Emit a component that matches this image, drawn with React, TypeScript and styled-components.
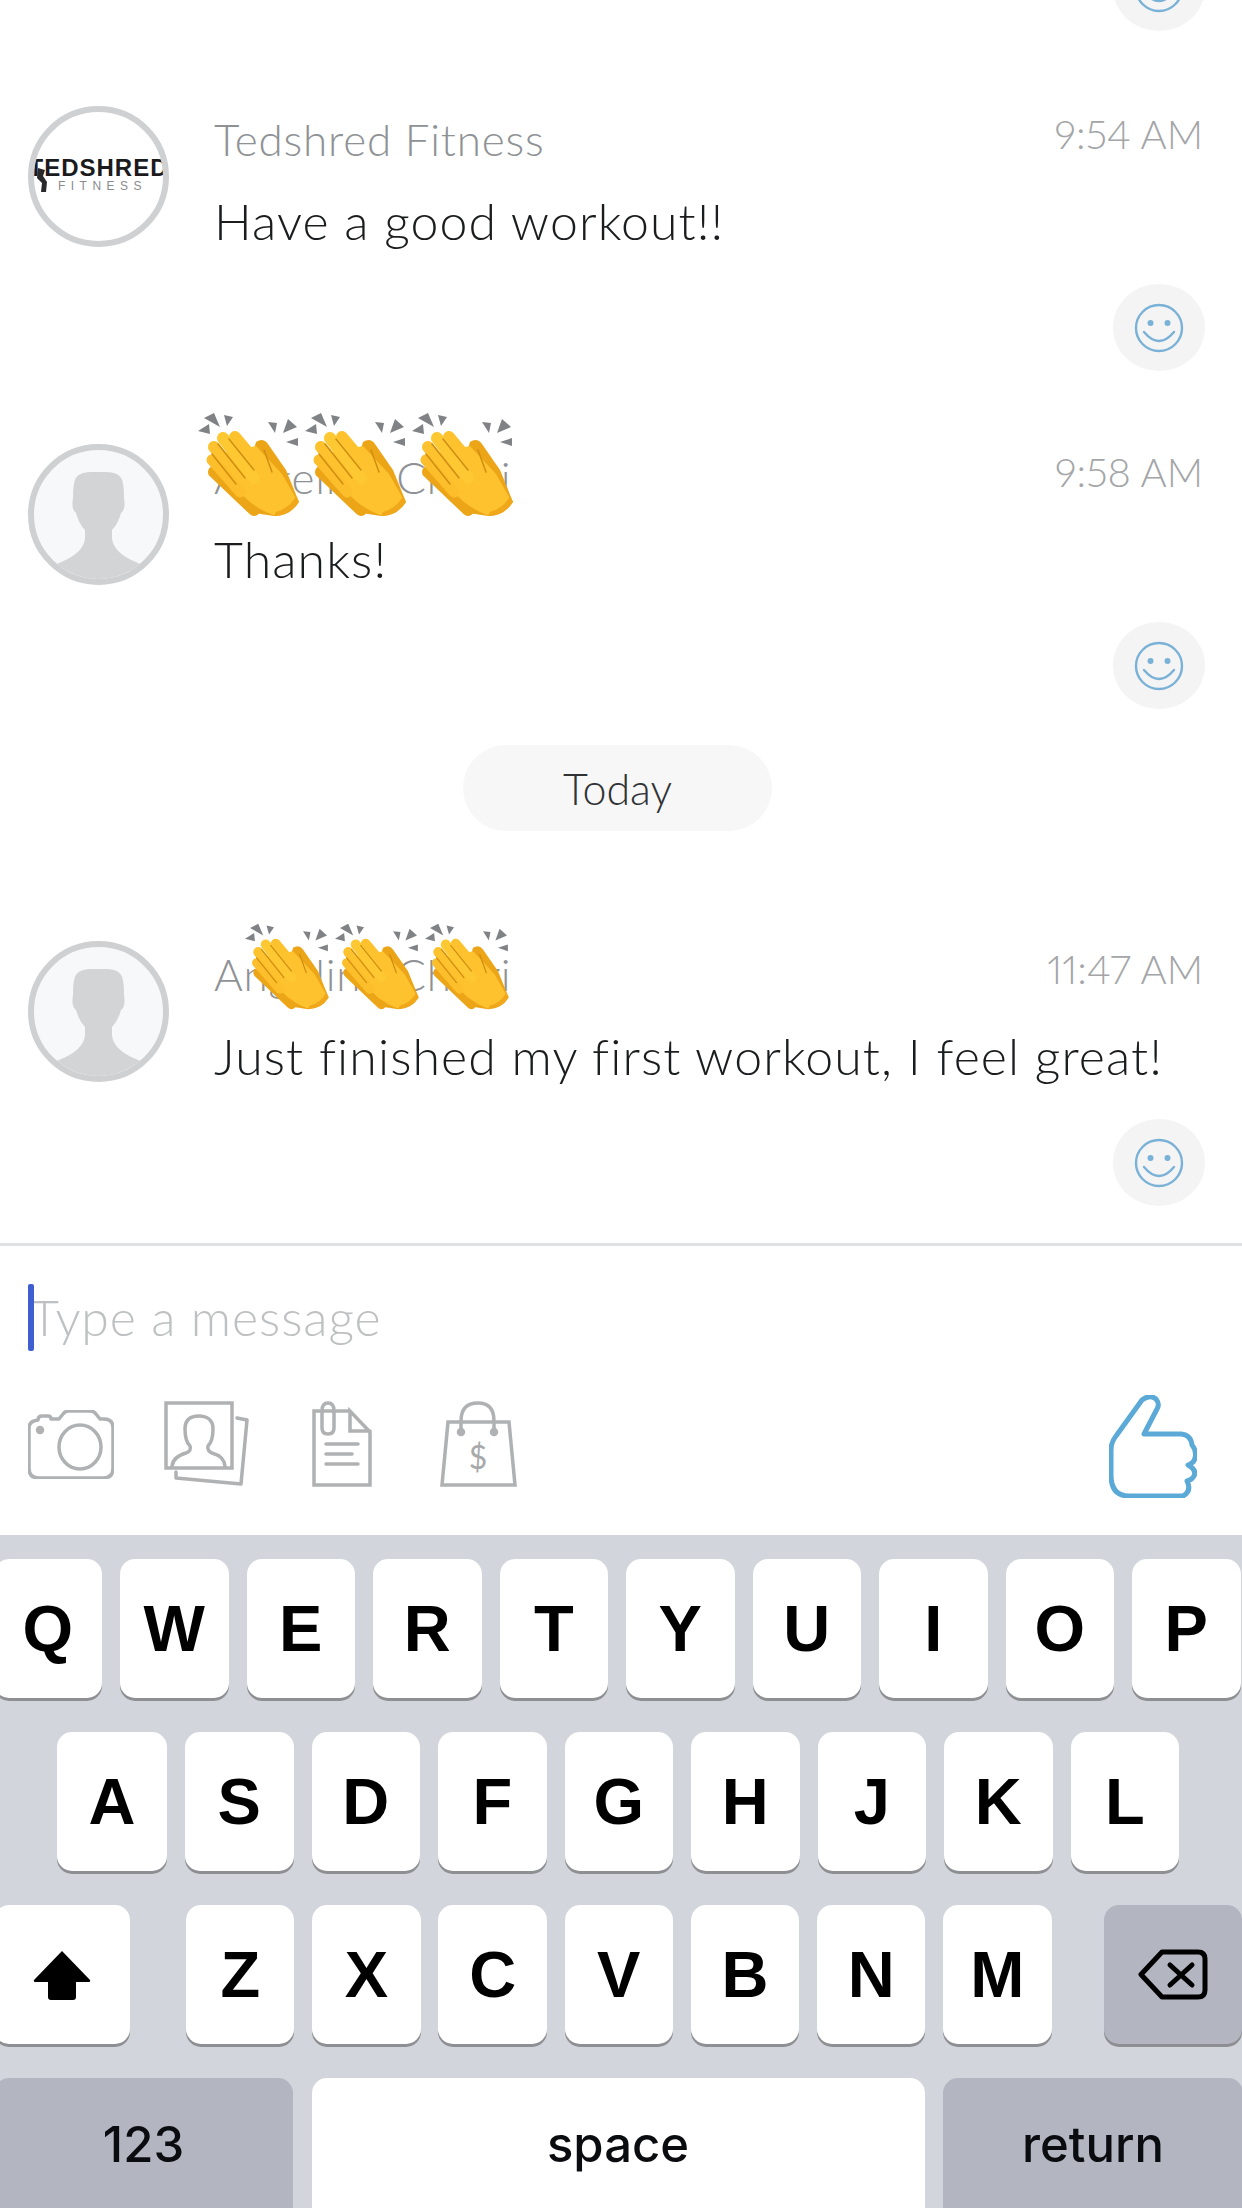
import React from "react";
import styled, { createGlobalStyle } from "styled-components";

const Global = createGlobalStyle`
  html, body { margin: 0; padding: 0; background: #fff; }
`;

const Page = styled.div`
  width: 1242px;
  height: 2208px;
  overflow: hidden;
  display: flex;
  flex-direction: column;
  background: #fff;
  font-family: "Lato", "Liberation Sans", sans-serif;
  font-variant-numeric: proportional-nums;
`;

const Feed = styled.div`
  height: 1243px;
  flex: none;
  display: flex;
  flex-direction: column;
  overflow: hidden;
`;

const ReactionRow = styled.div<{ $mt?: number }>`
  display: flex;
  justify-content: flex-end;
  padding-right: 37px;
  margin-top: ${(p) => p.$mt ?? 0}px;
`;

const ReactionButton = styled.div`
  width: 92px;
  height: 87px;
  border-radius: 50%;
  background: #f4f4f5;
  display: flex;
  align-items: center;
  justify-content: center;
`;

const Message = styled.div<{ $mt: number }>`
  display: grid;
  grid-template-columns: 141px 1fr;
  grid-template-rows: 178px auto;
  column-gap: 45px;
  padding: 0 0 0 28px;
  margin-top: ${(p) => p.$mt}px;
`;

const Avatar = styled.div`
  width: 141px;
  height: 141px;
  box-sizing: border-box;
  border: 6px solid #cfd0d1;
  border-radius: 50%;
  background: #fff;
  overflow: hidden;
  position: relative;
  display: flex;
  flex-direction: column;
  align-items: center;
  justify-content: center;
`;

const GhostAvatar = styled(Avatar)`
  background: #f7f8f9;
  justify-content: flex-end;
`;

const Logo = styled.div`
  display: flex;
  flex-direction: column;
  align-items: center;
  width: 100%;
  margin-top: -3px;
`;

const LogoMain = styled.div`
  font-family: "Liberation Sans", sans-serif;
  font-weight: 700;
  font-size: 24px;
  line-height: 20px;
  color: #1b1b1d;
  white-space: nowrap;
  letter-spacing: 1px;
`;

const LogoSub = styled.div`
  font-family: "Liberation Sans", sans-serif;
  font-size: 12px;
  line-height: 14px;
  padding-top: 1px;
  color: #8a8a8c;
  letter-spacing: 5.5px;
  white-space: nowrap;
  margin-left: 8px;
`;

const LogoFigure = styled.svg`
  position: absolute;
  left: 2px;
  top: 56px;
`;

const Body = styled.div`
  position: relative;
  min-width: 0;
`;

const Header = styled.div`
  display: flex;
  justify-content: space-between;
  align-items: flex-start;
  padding-right: 39px;
`;

const Name = styled.div`
  font-size: 44px;
  line-height: 56px;
  letter-spacing: 0.8px;
  font-weight: 300;
  color: #8f9295;
  padding-top: 5px;
  white-space: nowrap;
`;

const Time = styled.div`
  font-size: 40px;
  line-height: 56px;
  font-weight: 300;
  color: #a3a5a7;
  white-space: nowrap;
`;

const Text = styled.div`
  font-size: 50px;
  line-height: 60px;
  letter-spacing: 1.1px;
  font-weight: 300;
  color: #1a1c1e;
  margin-top: 24px;
  white-space: nowrap;
`;

const ClapStrip = styled.div<{ $x: number; $y: number; $gap: number }>`
  position: absolute;
  left: ${(p) => p.$x}px;
  top: ${(p) => p.$y}px;
  display: flex;
  gap: ${(p) => p.$gap}px;
`;

const ReactionCell = styled.div`
  grid-column: 1 / span 2;
`;

const DayRow = styled.div`
  display: flex;
  justify-content: flex-start;
  padding-left: 463px;
  margin-top: 36px;
`;

const DayPill = styled.div`
  width: 309px;
  height: 86px;
  border-radius: 43px;
  background: #f7f7f7;
  color: #303234;
  font-size: 43px;
  font-weight: 300;
  display: flex;
  align-items: center;
  justify-content: center;
`;

const Composer = styled.div`
  height: 292px;
  flex: none;
  box-sizing: border-box;
  border-top: 3px solid #dfe1e2;
  display: flex;
  flex-direction: column;
  padding: 38px 0 0 28px;
`;

const InputLine = styled.div`
  position: relative;
  height: 68px;
  display: flex;
  align-items: flex-start;
`;

const Caret = styled.div`
  position: absolute;
  left: 0;
  top: 0;
  width: 6px;
  height: 67px;
  border-radius: 2px;
  background: #3f5fd0;
`;

const Placeholder = styled.div`
  font-size: 50px;
  line-height: 66px;
  letter-spacing: 0.9px;
  font-weight: 300;
  color: #bec0c2;
  padding-left: 2px;
  white-space: nowrap;
`;

const Tools = styled.div`
  display: flex;
  align-items: center;
  margin-top: 38px;
  padding-right: 45px;
`;

const Tool = styled.svg<{ $mr: number }>`
  flex: none;
  margin-right: ${(p) => p.$mr}px;
  fill: none;
  stroke: #b0b1b3;
  stroke-width: 3.5;
  stroke-linejoin: round;
  stroke-linecap: round;
`;

const ThumbIcon = styled.svg`
  flex: none;
  margin-left: auto;
  margin-top: 5px;
  fill: none;
  stroke: #5aa9d6;
  stroke-width: 5;
  stroke-linejoin: round;
`;

const Keyboard = styled.div`
  flex: 1;
  background: #d2d5db;
  display: flex;
  flex-direction: column;
  padding-top: 24px;
  row-gap: 34px;
  overflow: hidden;
`;

const KeyRow = styled.div<{ $pl: number; $gap: number }>`
  display: flex;
  gap: ${(p) => p.$gap}px;
  margin-left: ${(p) => p.$pl}px;
  width: 1400px;
  height: 139px;
  flex: none;
`;

const Key = styled.div<{ $w?: number; $dark?: boolean; $ml?: number }>`
  flex: none;
  width: ${(p) => p.$w ?? 108.5}px;
  height: 139px;
  margin-left: ${(p) => p.$ml ?? 0}px;
  border-radius: 15px;
  background: ${(p) => (p.$dark ? "#b3b6c1" : "#ffffff")};
  box-shadow: 0 3px 0 #8e8f93;
  display: flex;
  align-items: center;
  justify-content: center;
  color: #000;
`;

const WideKey = styled(Key)`
  height: 150px;
  box-sizing: border-box;
  padding-bottom: 18px;
`;

const Letter = styled.span`
  font-family: "Liberation Sans", sans-serif;
  font-size: 65px;
  font-weight: 700;
  line-height: 1;
`;

const Word = styled.span`
  font-family: "Inter", "Liberation Sans", sans-serif;
  font-size: 49px;
  font-weight: 500;
  line-height: 1;
  color: #0b0c10;
`;

const Smiley = () => (
  <svg width="50" height="50" viewBox="0 0 50 50" fill="none">
    <circle cx="25" cy="25" r="23" stroke="#7ab1d6" strokeWidth="2.4" />
    <circle cx="16.5" cy="20" r="3" fill="#7ab1d6" />
    <circle cx="33.5" cy="20" r="3" fill="#7ab1d6" />
    <path d="M10 29 Q25 47 40 29" stroke="#7ab1d6" strokeWidth="2.4" strokeLinecap="round" />
  </svg>
);

const Clap = ({ size }: { size: number }) => (
  <svg width={size} height={size} viewBox="0 0 105 105">
    <g fill="#808285">
      <polygon points="0,19 11,12 12,22" />
      <polygon points="6,6 16,1 22,15" />
      <polygon points="26,3 35,5 29,14" />
      <polygon points="70,10 79,11 77,21" />
      <polygon points="90,7 99,15 85,21" />
      <polygon points="88,30 100,26 100,34" />
    </g>
    <path d="M58 30 Q65 25 70 32 L88 58 L101 90 Q92 104 76 104 L50 100 L52 50 Z" fill="#eda518" />
    <line x1="16" y1="60" x2="56" y2="98" stroke="#eda518" strokeWidth="12" strokeLinecap="round" />
    <path d="M20 42 L58 34 L84 62 L100 90 Q92 103 75 103 Q62 98 52 90 L26 66 Z" fill="#fdc22e" />
    <line x1="37" y1="25" x2="68" y2="62" stroke="#fdc22e" strokeWidth="12" strokeLinecap="round" />
    <line x1="25" y1="26" x2="56" y2="66" stroke="#fec832" strokeWidth="12" strokeLinecap="round" />
    <line x1="16" y1="35" x2="47" y2="73" stroke="#fdc22e" strokeWidth="12" strokeLinecap="round" />
    <line x1="14" y1="48" x2="42" y2="80" stroke="#fcbe2a" strokeWidth="11" strokeLinecap="round" />
    <g stroke="#d08d12" strokeWidth="1.5" strokeLinecap="round">
      <line x1="31" y1="27" x2="56" y2="58" />
      <line x1="20" y1="32" x2="47" y2="66" />
      <line x1="14" y1="42" x2="38" y2="72" />
      <line x1="66" y1="38" x2="74" y2="60" />
    </g>
    <path d="M78 100 Q92 96 98 84 L101 90 Q92 104 76 104 Z" fill="#f0a81a" />
  </svg>
);

const Silhouette = () => (
  <svg width="129" height="129" viewBox="0 0 129 129">
    <path
      d="M0 129 V125 L25 113 Q50 103 51 88 V80 Q45 74 42 63 Q37 60 39 48 Q39 38 40 34 Q41 22 57 22 H72 Q88 22 89 34 Q90 38 90 48 Q92 60 87 63 Q84 74 78 80 V88 Q79 103 104 113 L129 125 V129 Z"
      fill="#d2d4d6"
    />
  </svg>
);

const Claps = ({ size, x, y, gap }: { size: number; x: number; y: number; gap: number }) => (
  <ClapStrip $x={x} $y={y} $gap={gap}>
    <Clap size={size} />
    <Clap size={size} />
    <Clap size={size} />
  </ClapStrip>
);

const rows = {
  top: "QWERTYUIOP".split(""),
  mid: "SDFGHJKL".split(""),
  low: "XCVBNM".split(""),
};

export default function App() {
  return (
    <Page>
      <Global />
      <Feed>
        <ReactionRow $mt={-56}>
          <ReactionButton>
            <Smiley />
          </ReactionButton>
        </ReactionRow>

        <Message $mt={75}>
          <Avatar>
            <Logo>
              <LogoMain>TEDSHRED</LogoMain>
              <LogoSub>FITNESS</LogoSub>
            </Logo>
            <LogoFigure width="12" height="24" viewBox="0 0 12 24">
              <path d="M2 0 L9 2 L7 8 L11 14 L10 24 L5 24 L6 15 L1 10 Z" fill="#2a2a2c" />
            </LogoFigure>
          </Avatar>
          <Body>
            <Header>
              <Name>Tedshred Fitness</Name>
              <Time>9:54 AM</Time>
            </Header>
            <Text>Have a good workout!!</Text>
          </Body>
          <ReactionCell>
            <ReactionRow>
              <ReactionButton>
                <Smiley />
              </ReactionButton>
            </ReactionRow>
          </ReactionCell>
        </Message>

        <Message $mt={73}>
          <GhostAvatar>
            <Silhouette />
          </GhostAvatar>
          <Body>
            <Header>
              <Name>Angelina Chiari</Name>
              <Time>9:58 AM</Time>
            </Header>
            <Text>Thanks!</Text>
            <Claps size={105} x={-16} y={-32} gap={2} />
          </Body>
          <ReactionCell>
            <ReactionRow>
              <ReactionButton>
                <Smiley />
              </ReactionButton>
            </ReactionRow>
          </ReactionCell>
        </Message>

        <DayRow>
          <DayPill>Today</DayPill>
        </DayRow>

        <Message $mt={110}>
          <GhostAvatar>
            <Silhouette />
          </GhostAvatar>
          <Body>
            <Header>
              <Name>Angelina Chiari</Name>
              <Time>11:47 AM</Time>
            </Header>
            <Text>Just finished my first workout, I feel great!</Text>
            <Claps size={87} x={31} y={-18} gap={3} />
          </Body>
          <ReactionCell>
            <ReactionRow>
              <ReactionButton>
                <Smiley />
              </ReactionButton>
            </ReactionRow>
          </ReactionCell>
        </Message>
      </Feed>

      <Composer>
        <InputLine>
          <Placeholder>Type a message</Placeholder>
          <Caret />
        </InputLine>
        <Tools>
          <Tool $mr={50} width="86" height="69" viewBox="0 0 86 69">
            <path d="M10 10 Q10 6 14 6 H20 Q23 6 23 9 H31 L35 4 Q37 1 41 1 H62 Q66 1 68 4 L72 9 H76 Q85 9 85 18 V58 Q85 68 75 68 H11 Q1 68 1 58 V18 Q1 11 10 10 Z" />
            <ellipse cx="52" cy="37" rx="21" ry="22" />
            <circle cx="12" cy="20" r="2.5" fill="#b0b1b3" />
          </Tool>
          <Tool $mr={63} width="85" height="86" viewBox="0 0 85 86">
            <rect x="2" y="2" width="66" height="65" strokeLinejoin="miter" />
            <path d="M73 17 L83 19 L77 83 L12 77 L12 71" />
            <path d="M8 65 C9 57 15 54 22 52 C26 51 27 48 26 45 C23 42 21 36 21 28 C21 18 27 15 35 15 C43 15 49 19 49 28 C49 36 47 42 44 45 C43 48 45 51 48 52 C55 54 60 57 61 65" />
          </Tool>
          <Tool $mr={68} width="60" height="86" viewBox="0 0 60 86">
            <path d="M38 10 H2 V84 H58 V31 L38 10 V30 H58" strokeLinejoin="miter" />
            <path d="M10 10 V27 Q10 33 16 33 Q22 33 22 27 V10 Q22 2 16 2 Q10 2 10 10" />
            <path d="M14 43 H46 M14 53 H40 M14 63 H46" />
          </Tool>
          <Tool $mr={0} width="77" height="86" viewBox="0 0 77 86">
            <path d="M8 21 H69 L75 84 H2 Z" strokeLinejoin="miter" />
            <path d="M21 31 V20 Q21 2 38 2 Q54 2 54 20 V31" />
            <circle cx="21" cy="31" r="2.5" fill="#b0b1b3" />
            <circle cx="54" cy="31" r="2.5" fill="#b0b1b3" />
            <text x="38" y="68" textAnchor="middle" fontFamily="Lato, sans-serif" fontWeight="400" fontSize="32" fill="#a8a9ab" stroke="none">
              $
            </text>
          </Tool>
          <ThumbIcon width="88" height="103" viewBox="0 0 88 103">
            <path d="M33 5 Q41 -1 47 4 Q51 9 48 14 L35 39 H72 Q82 40 83 50 Q88 56 86 63 Q85 68 79 70 Q88 75 85 81 Q83 85 78 86 Q83 96 74 101 H20 Q2 101 2 80 V55 Q2 47 7 41 Z" />
          </ThumbIcon>
        </Tools>
      </Composer>

      <Keyboard>
        <KeyRow $pl={-6.5} $gap={18}>
          {rows.top.map((k) => (
            <Key key={k}>
              <Letter>{k}</Letter>
            </Key>
          ))}
        </KeyRow>
        <KeyRow $pl={57} $gap={18}>
          <Key $w={110}>
            <Letter>A</Letter>
          </Key>
          {rows.mid.map((k) => (
            <Key key={k}>
              <Letter>{k}</Letter>
            </Key>
          ))}
        </KeyRow>
        <KeyRow $pl={-6} $gap={17.7}>
          <Key $w={136}>
            <svg width="58" height="50" viewBox="0 0 58 50">
              <path d="M29 1 L57 30 Q58 32 55 32 H43 V47 Q43 50 40 50 H18 Q15 50 15 47 V32 H3 Q0 32 1 30 Z" fill="#000" />
            </svg>
          </Key>
          <Key $ml={38.3}>
            <Letter>Z</Letter>
          </Key>
          {rows.low.map((k) => (
            <Key key={k}>
              <Letter>{k}</Letter>
            </Key>
          ))}
          <Key $w={138} $dark $ml={34.3}>
            <svg width="70" height="51" viewBox="0 0 70 51" fill="none" stroke="#000" strokeWidth="5" strokeLinecap="round" strokeLinejoin="round">
              <path d="M24 3 H60 Q67 3 67 10 V41 Q67 48 60 48 H24 L3 25.5 Z" />
              <path d="M32 16 L54 36 M54 16 L32 36" />
            </svg>
          </Key>
        </KeyRow>
        <KeyRow $pl={-6} $gap={18.5}>
          <WideKey $w={299} $dark>
            <Word>123</Word>
          </WideKey>
          <WideKey $w={613}>
            <Word>space</Word>
          </WideKey>
          <WideKey $w={300} $dark>
            <Word>return</Word>
          </WideKey>
        </KeyRow>
      </Keyboard>
    </Page>
  );
}
